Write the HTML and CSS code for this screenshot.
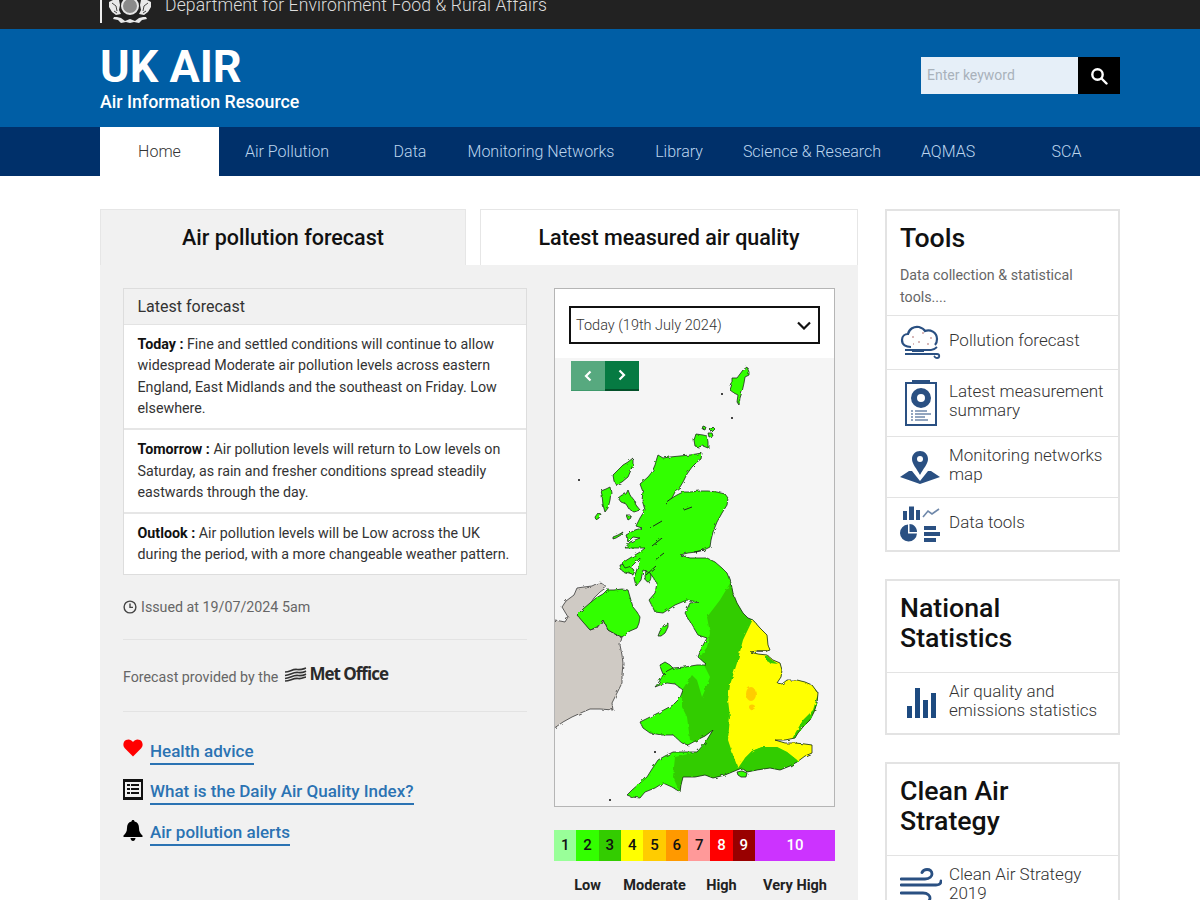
FILE: index.html
```html
<!DOCTYPE html>
<html lang="en">
<head>
  <meta charset="UTF-8" />
  <title>UK AIR - Air Information Resource</title>
  <link rel="stylesheet" href="styles.css">
</head>
<body>
  <div class="topbar">
    <div class="wrap topbar-in">
      <span class="crest-rule"></span>
      <svg class="crest" width="44" height="24" viewBox="0 0 44 24">
        <path d="M1 2l4-2h6l1 5-1 5 2 4-5 1-4-3-3-5zM43 2l-4-2h-6l-1 5 1 5-2 4 5 1 4-3 3-5z" fill="#e8e8e8"/>
        <path d="M4 3l4 3 1 5M6 11l3 2M40 3l-4 3-1 5M38 11l-3 2" fill="none" stroke="#444" stroke-width="1"/>
        <circle cx="22" cy="6" r="8" fill="#8a8a8a" stroke="#e8e8e8" stroke-width="2"/>
        <path d="M6 17l3 0 4 1 4 3 5-2 5 2 4-3 4-1 3 0 1 2-5 1-3 3-5-1-4 1-4-1-5 1-3-3-5-1z" fill="#e8e8e8"/>
      </svg>
      <span class="dept">Department for Environment Food &amp; Rural Affairs</span>
    </div>
  </div>

  <header class="header">
    <div class="wrap header-in">
      <div>
        <div class="site-name">UK AIR</div>
        <div class="site-sub">Air Information Resource</div>
      </div>
      <div class="search">
        <div class="search-input">Enter keyword</div>
        <div class="search-btn">
          <svg width="18" height="18" viewBox="0 0 18 18" fill="none" stroke="#fff" stroke-width="2.400"><circle cx="7.500" cy="7.500" r="5.200"/><path d="M11.500 11.500l5 5" stroke-linecap="round"/></svg>
        </div>
      </div>
    </div>
  </header>

  <nav class="nav">
    <div class="wrap nav-links">
      <a class="active" href="#">Home</a>
      <a href="#">Air Pollution</a>
      <a href="#">Data</a>
      <a href="#">Monitoring Networks</a>
      <a href="#">Library</a>
      <a href="#">Science &amp; Research</a>
      <a href="#">AQMAS</a>
      <a href="#">SCA</a>
    </div>
  </nav>

  <div class="wrap page">
    <main class="main">
      <div class="tabs">
        <div class="tab tab-on">Air pollution forecast</div>
        <div class="tab">Latest measured air quality</div>
      </div>
      <div class="tab-panel">
        <div class="forecast">
          <div class="fc-box">
            <div class="fc-head">Latest forecast</div>
            <div class="fc-row"><b>Today :</b> Fine and settled conditions will continue to allow widespread Moderate air pollution levels across eastern England, East Midlands and the southeast on Friday. Low elsewhere.</div>
            <div class="fc-row"><b>Tomorrow :</b> Air pollution levels will return to Low levels on Saturday, as rain and fresher conditions spread steadily eastwards through the day.</div>
            <div class="fc-row"><b>Outlook :</b> Air pollution levels will be Low across the UK during the period, with a more changeable weather pattern.</div>
          </div>

          <div class="issued">
            <svg width="14" height="14" viewBox="0 0 14 14" fill="none" stroke="#444" stroke-width="1.400"><circle cx="7" cy="7" r="5.900"/><path d="M7 3.400V7.400H10"/></svg>
            Issued at 19/07/2024 5am
          </div>

          <div class="provider">
            <span>Forecast provided by the</span>
            <svg class="met-mark" width="23" height="15" viewBox="0 0 23 15" fill="none" stroke="#333" stroke-width="1.700"><path d="M1 5C6 5 8 2 13 2.500S19 2 22 1"/><path d="M1 8.500C6 8 9 5 14 5.500S20 5 22 4"/><path d="M1 11.500C6 11 9 8 14 8.500S20 8 22 7"/><path d="M1 14C6 14 9 11 14 11.500S20 10 22 10"/></svg>
            <span class="met-name">Met Office</span>
          </div>

          <ul class="links">
            <li>
              <svg width="20" height="18" viewBox="0 0 20 18"><path d="M10 17.500L1.800 9.200C-.6 6.600.2 2.400 3 1 5.600-.2 8.400.6 10 3c1.600-2.400 4.400-3.200 7-2 2.800 1.400 3.600 5.600 1.200 8.200z" fill="#f00"/></svg>
              <a href="#">Health advice</a>
            </li>
            <li>
              <svg width="20" height="21" viewBox="0 0 20 21"><path d="M0 0h20v21H0z" fill="#111"/><path d="M2 3h16v15H2z" fill="#f1f1f1"/><path d="M4 5h3v2H4zM8 5h8v2H8zM4 9h3v2H4zM8 9h8v2H8zM4 13h3v2H4zM8 13h8v2H8z" fill="#111"/></svg>
              <a href="#">What is the Daily Air Quality Index?</a>
            </li>
            <li>
              <svg width="20" height="21" viewBox="0 0 19 21"><path d="M9.500 0c1 0 1.500.7 1.500 1.600 3.200.7 4.500 3.300 4.500 6.400 0 3.600 1.200 5.400 3.500 7.500v1.500H0v-1.500C2.300 13.400 3.500 11.600 3.500 8c0-3.100 1.300-5.700 4.500-6.400C8 .7 8.500 0 9.500 0z" fill="#000"/><path d="M7 18h5c0 1.500-1 3-2.500 3S7 19.500 7 18z" fill="#000"/></svg>
              <a href="#">Air pollution alerts</a>
            </li>
          </ul>
        </div>

        <div class="map-col">
          <div class="map-box">
            <div class="map-top">
              <div class="day-select">
                <span>Today (19th July 2024)</span>
                <svg width="14" height="9" viewBox="0 0 14 9" fill="none" stroke="#111" stroke-width="2.200"><path d="M1 1.500l6 6 6-6"/></svg>
              </div>
            </div>
            <div class="map-area">
              <svg class="uk-map" width="279" height="448" viewBox="555 358 279 448">
                <defs>
                  <filter id="rough" x="-5%" y="-5%" width="110%" height="110%">
                    <feTurbulence type="fractalNoise" baseFrequency=".22" numOctaves="2" seed="4"/>
                    <feDisplacementMap in="SourceGraphic" scale="3"/>
                  </filter>
                  <clipPath id="gb">
                    <path id="gbShape" d="M658 455 663 458 670 457 680 456 690 455 702 453 701 459 697 462 692 467 687 474 683 482 680 487 676 490 672 498 677 495 683 492 690 492 700 491 708 491 717 492 725 494 728 498 727 505 722 513 717 522 713 532 711 540 710 547 704 550 696 552 688 553 680 555 690 558 700 558 707 558 715 562 722 568 727 573 731 583 733 593 737 603 743 613 748 618 753 620 760 628 767 635 768 645 770 650 767 651 757 651 750 652 758 654 767 655 773 660 780 663 782 670 781 677 777 683 782 684 787 680 797 680 805 682 812 685 818 693 817 703 814 712 810 720 803 727 798 733 795 738 785 740 775 740 785 743 795 743 805 744 812 745 812 753 805 756 797 762 790 766 780 770 770 768 757 770 747 772 742 768 737 770 725 775 713 778 705 775 695 777 683 777 681 785 680 792 672 787 663 783 655 788 645 792 640 798 632 797 627 795 632 790 640 783 647 777 652 769 658 760 665 756 673 752 685 752 697 752 705 743 713 730 705 736 697 740 688 745 682 743 673 735 662 735 650 733 643 728 640 722 646 719 650 717 660 712 673 705 680 698 683 690 675 684 667 683 660 685 655 687 659 682 663 675 667 671 673 668 685 667 697 665 707 665 698 657 702 647 707 638 698 635 692 625 685 613 690 603 698 602 687 600 675 605 663 613 655 612 649 600 655 593 657 583 650 573 643 570 641 580 636 586 634 578 638 566 640 558 632 566 625 568 622 563 630 558 640 552 645 548 632 548 625 548 630 542 640 538 633 537 628 542 626 535 635 530 642 528 636 526 640 518 645 510 642 500 643 492 640 484 648 477 652 472 655 465 657 458z"/>
                  </clipPath>
                </defs>

                <g filter="url(#rough)">
                  <!-- ireland -->
                  <path class="eire" d="M555 620 565 622 568 617 562 607 566 601 574 595 577 588 584 587 592 586 600 582 607 587 600 592 594 598 590 604 584 610 578 615 583 621 590 630 597 628 603 620 608 630 615 634 622 637 620 645 622 655 623 663 622 675 622 683 617 693 612 703 613 710 600 709 590 709 583 712 572 717 563 722 553 729 550 625z"/>
                  <!-- northern ireland -->
                  <path class="land" d="M577 615 583 609 590 603 596 598 603 594 607 590 614 590 622 589 628 590 630 597 633 607 637 612 640 617 639 623 637 628 630 631 622 637 615 634 608 630 605 624 603 620 597 627 590 630 583 622z"/>

                  <!-- shetland and orkney -->
                  <path class="land" d="M747 367 749 372 749 375 745 377 744 383 742 392 740 398 739 405 737 402 738 395 734 393 730 390 732 384 732 378 737 378 740 374 743 370z"/>
                  <path class="land" d="M696 434 703 435 707 436 708 442 708 448 703 446 698 447 695 446 694 440z"/>
                  <path class="land" d="M703 426 706 427 705 430 702 429zM713 427 715 429 712 432 710 430zM708 433 712 433 713 436 709 437z"/>

                  <!-- hebrides and the other islands -->
                  <path class="land" d="M633 458 633 464 631 470 628 477 622 482 616 485 614 481 613 475 619 469 623 465 628 462z"/>
                  <path class="land" d="M610 487 611 492 610 500 608 508 605 512 603 505 602 495 601 491 606 489z"/>
                  <path class="land" d="M598 513 601 514 599 518 596 520 595 517z"/>
                  <path class="land" d="M628 490 630 495 634 500 636 505 640 510 634 512 629 509 626 504 621 502 618 498 622 495 626 494z"/>
                  <path class="land" d="M613 537 618 535 623 532 621 535 616 538 613 539z"/>
                  <path class="land" d="M626 515 630 515 631 518 628 520z"/>
                  <path class="land" d="M620 565 625 564 629 566 634 570 632 574 629 573 624 572 621 570z"/>
                  <ellipse class="land" cx="648" cy="576" rx="3" ry="6"/>
                  <path class="land" d="M658 636 660 631 664 625 668 623 668 627 665 633 661 636z"/>
                  <path class="land" d="M660 665 665 662 670 665 673 668 670 673 667 675 663 674 661 669z"/>
                  <path class="land" d="M737 772 742 771 747 773 746 777 741 777 738 775z"/>

                  <!-- england wales scotland, bands clipped to the coast -->
                  <use href="#gbShape" fill="#33ff00"/>
                  <g clip-path="url(#gb)">
                    <path fill="#33cc00" d="M732 580 720 600 707 617 710 633 707 647 700 657 710 677 705 690 702 697 697 680 692 675 682 690 682 707 687 717 690 740 705 745 697 752 675 757 673 777 683 800 760 800 760 620 740 595z"/>
                    <path fill="#ffff00" d="M753 619 743 640 737 663 730 685 728 700 730 717 728 740 733 755 738 768 745 758 752 751 762 747 777 747 787 752 797 760 812 770 835 760 835 660 790 620z"/>
                    <path fill="#33cc00" d="M745 758 752 751 762 747 777 747 787 752 797 760 806 772 740 780z"/>
                    <path fill="#33cc00" d="M766 655 772 660 778 664 770 663 766 660z"/>
                    <path fill="#33cc00" d="M822 690 817 697 813 710 803 720 797 730 792 739 825 739z"/>
                    <ellipse fill="#ffcc00" cx="751" cy="694" rx="5" ry="7"/>
                    <ellipse fill="#ffcc00" cx="752" cy="707" rx="3" ry="2.500"/>
                  </g>
                  <use href="#gbShape" class="coast"/>
                  <path class="inlet" d="M665 503 672 498M684 510 692 507M694 552 704 550M650 528 662 521M652 546 662 538M655 560 664 553M646 575 656 566M757 651 767 651"/>
                </g>
                <path class="dot" d="M578 479h2v2h-2zM721 393h2v2h-2zM731 417h2v2h-2zM609 799h2v2h-2zM654 751h2v2h-2z"/>
              </svg>
              <div class="map-arrows">
                <div class="arrow arrow-prev"><svg width="8" height="12" viewBox="0 0 8 12" fill="none" stroke="#fff" stroke-width="2.200"><path d="M6.500 1.500L2 6l4.500 4.500"/></svg></div>
                <div class="arrow arrow-next"><svg width="8" height="12" viewBox="0 0 8 12" fill="none" stroke="#fff" stroke-width="2.200"><path d="M1.500 1.500L6 6l-4.500 4.500"/></svg></div>
              </div>
            </div>
          </div>

          <div class="scale">
            <div class="cell c1">1</div>
            <div class="cell c2">2</div>
            <div class="cell c3">3</div>
            <div class="cell c4">4</div>
            <div class="cell c5">5</div>
            <div class="cell c6">6</div>
            <div class="cell c7">7</div>
            <div class="cell c8">8</div>
            <div class="cell c9">9</div>
            <div class="cell c10">10</div>
            <div class="band">Low</div>
            <div class="band">Moderate</div>
            <div class="band">High</div>
            <div class="band band-last">Very High</div>
          </div>
        </div>
      </div>
    </main>

    <aside class="side">
      <section class="card">
        <div class="card-head">
          <h2>Tools</h2>
          <p>Data collection &amp; statistical tools....</p>
        </div>
        <a class="tool tool-1" href="#">
          <svg width="42" height="36" viewBox="0 0 42 36" fill="none" stroke="#2a5082" stroke-width="2.200">
            <path d="M11 22c-5 0-9-2-9-7 0-4 3-6 6-6 1-5 6-8 11-7 3 1 5 2 6 4 5-2 12 1 12 8 0 3-1 5-2 6"/>
            <path d="M5 25h26c3 0 4-1 6-3M5 29h32c3 0 3 4 0 4-2 0-2-1-3-2M12 26h12" stroke-width="1.800"/>
            <path d="M12 12h2M22 8h2M30 13h2M18 17h2M27 19h2M13 19h1" stroke="#d9b9b9" stroke-width="2"/>
          </svg>
          <span>Pollution forecast</span>
        </a>
        <a class="tool tool-2" href="#">
          <svg width="42" height="46" viewBox="0 0 42 46">
            <path d="M6 3h30v42H6z" fill="#fff" stroke="#2a5082" stroke-width="2"/>
            <path d="M12 0h18v3H12z" fill="#2a5082"/>
            <circle cx="21" cy="18" r="7" fill="none" stroke="#2a5082" stroke-width="6"/>
            <path d="M11 31h2M15 31h12M11 34h2M15 34h16M11 37h2M15 37h10M11 40h2M15 40h13" stroke="#6f88aa" stroke-width="1.500"/>
          </svg>
          <span>Latest measurement summary</span>
        </a>
        <a class="tool tool-3" href="#">
          <svg width="42" height="34" viewBox="0 0 42 34">
            <path d="M20 1c4.500 0 8 3.500 8 8 0 5-5 10-8 16-3-6-8-11-8-16 0-4.500 3.500-8 8-8z" fill="#2a5082"/>
            <circle cx="20" cy="9" r="3" fill="#fff"/>
            <path d="M9 21 0 27 20 34 40 27 31 21 28 21 20 31 12 21z" fill="#2a5082"/>
          </svg>
          <span>Monitoring networks map</span>
        </a>
        <a class="tool tool-4" href="#">
          <svg width="42" height="38" viewBox="0 0 42 38" fill="#2a5082">
            <path d="M3 6h4v9H3zM9 1.500h5V15H9zM16 5h4v10h-4z"/>
            <path d="M23 12l5-6 4 3 7-5" fill="none" stroke="#6f88aa" stroke-width="1.600"/>
            <path d="M8 19.500a8.500 8.500 0 1 0 9 9H8z"/>
            <path d="M9.500 19c4 0 7.500 3.500 7.500 8H9.500z"/>
            <path d="M24 21h12v4H24zM24 27h16v4H24zM24 33h12v4H24z"/>
          </svg>
          <span>Data tools</span>
        </a>
      </section>

      <section class="card">
        <div class="card-head card-head-big">
          <h2>National Statistics</h2>
        </div>
        <a class="tool tool-5" href="#">
          <svg width="42" height="32" viewBox="0 0 42 32" fill="#1d4a80">
            <path d="M7 19h5v12H7zM15 1h5v30h-5zM23 13h5v18h-5zM31 6h5v25h-5z"/>
          </svg>
          <span>Air quality and emissions statistics</span>
        </a>
      </section>

      <section class="card">
        <div class="card-head card-head-big">
          <h2>Clean Air Strategy</h2>
        </div>
        <a class="tool tool-6" href="#">
          <svg width="42" height="36" viewBox="0 0 42 36" fill="none" stroke="#2a5082" stroke-width="2.800" stroke-linecap="round">
            <path d="M1 11h24c5 0 7-3 7-5 0-3-2-4.500-5-4.500-2 0-4 1-5 3"/>
            <path d="M1 17h35c3 0 5-1 5-4"/>
            <path d="M1 25h22c5 0 7 3 7 5s-2 5-5 5"/>
          </svg>
          <span>Clean Air Strategy 2019</span>
        </a>
      </section>
    </aside>
  </div>
</body>
</html>
```

FILE: styles.css
```css
html, body {
  margin: 0;
  padding: 0;
  height: 900px;
  overflow: hidden;
}
body {
  font-family: 'Roboto', 'Liberation Sans', sans-serif;
  color: #333;
  background: #fff;
}
.wrap {
  width: 1020px;
  margin-left: 100px;
}

/* Top bar */
.topbar {
  height: 29px;
  background: #222;
  overflow: hidden;
}
.topbar-in {
  display: flex;
  align-items: flex-start;
  height: 29px;
}
.crest-rule {
  width: 2px;
  height: 23px;
  background: #eee;
}
.crest {
  margin-left: 6px;
  margin-right: 13px;
  flex: none;
}
.dept {
  font-size: 17.600px;
  font-weight: 300;
  color: #ddd;
  line-height: 10px;
  letter-spacing: .1px;
  white-space: nowrap;
}

/* Header */
.header {
  background: #005ea5;
  height: 98px;
}
.header-in {
  display: flex;
  justify-content: space-between;
  align-items: flex-start;
}
.site-name {
  font-size: 45px;
  font-weight: 700;
  color: #fff;
  line-height: 44px;
  padding-top: 16px;
}
.site-sub {
  font-size: 17.800px;
  font-weight: 500;
  color: #fff;
  line-height: 22px;
  margin-top: 2px;
}
.search {
  display: flex;
  margin-top: 28px;
}
.search-input {
  width: 151px;
  height: 37px;
  padding-left: 6px;
  background: #e6eff8;
  color: #a9b2bb;
  font-size: 14px;
  line-height: 37px;
}
.search-btn {
  width: 42px;
  height: 37px;
  background: #000;
  display: flex;
  align-items: center;
  justify-content: center;
}

/* Nav */
.nav {
  background: #00306a;
  height: 49px;
}
.nav-links {
  display: grid;
  grid-template-columns: 119px 136px 110px 152px 124px 142px 130px 107px;
}
.nav-links a {
  height: 49px;
  line-height: 49px;
  text-align: center;
  font-size: 16px;
  font-weight: 300;
  color: #bcd5ee;
  text-decoration: none;
}
.nav-links a.active {
  background: #fff;
  color: #333;
}

/* Page */
.page {
  display: flex;
  justify-content: space-between;
  padding-top: 33px;
}
.main {
  width: 758px;
}
.tabs {
  display: grid;
  grid-template-columns: 366px 378px;
  column-gap: 14px;
}
.tab {
  height: 56px;
  line-height: 55px;
  text-align: center;
  font-size: 21.500px;
  font-weight: 500;
  color: #111;
  background: #fff;
  border: 1px solid #e6e6e6;
  border-bottom: 0;
  box-sizing: border-box;
}
.tab-on {
  background: #f1f1f1;
}
.tab-panel {
  background: #f1f1f1;
  display: flex;
  padding: 23px 23px 40px;
  height: 700px;
  box-sizing: border-box;
  gap: 27px;
}

/* Forecast column */
.forecast {
  width: 404px;
  flex: none;
}
.fc-box {
  border: 1px solid #ddd;
  background: #fff;
}
.fc-head {
  background: #f1f1f1;
  font-size: 16px;
  line-height: 35px;
  padding-left: 13.500px;
  border-bottom: 1px solid #e3e3e3;
}
.fc-row {
  padding: 9px 14px 8.500px 13.500px;
  font-size: 14.250px;
  line-height: 21.400px;
  color: #333;
  border-bottom: 2px solid #e6e6e6;
}
.fc-row:last-child {
  border-bottom: 0;
}
.fc-row b {
  color: #111;
  font-weight: 700;
}
.issued {
  display: flex;
  align-items: center;
  gap: 4px;
  font-size: 14.250px;
  color: #666;
  height: 64px;
  border-bottom: 1px solid #e3e3e3;
}
.provider {
  display: flex;
  align-items: center;
  height: 68px;
  padding-top: 3px;
  border-bottom: 1px solid #e3e3e3;
  font-size: 14.250px;
  color: #666;
}
.met-mark {
  margin-left: 6px;
  margin-bottom: 6px;
}
.met-name {
  font-family: 'Open Sans', sans-serif;
  font-weight: 700;
  font-size: 17px;
  letter-spacing: -1px;
  color: #2a2a2a;
  margin-left: 2px;
  margin-bottom: 7px;
}
.links {
  list-style: none;
  margin: 17.500px 0 0;
  padding: 0;
}
.links li {
  height: 40.500px;
  display: flex;
  align-items: flex-start;
  gap: 7px;
}
.links svg {
  margin-top: 9px;
  flex: none;
}
.links li a {
  display: block;
  margin-top: 10px;
  font-size: 17px;
  font-weight: 500;
  line-height: 23px;
  color: #2b73b3;
  text-decoration: none;
  border-bottom: 2px solid #2b73b3;
}

/* Map column */
.map-col {
  width: 281px;
  flex: none;
}
.map-box {
  border: 1px solid #b5b5b5;
  background: #fff;
}
.map-top {
  height: 69px;
  padding: 17px 14px 0;
  box-sizing: border-box;
}
.day-select {
  height: 38px;
  border: 2.500px solid #111;
  display: flex;
  align-items: center;
  justify-content: space-between;
  padding: 0 7px 0 5px;
  font-size: 14.500px;
  font-weight: 300;
  color: #333;
  box-sizing: border-box;
}
.map-area {
  position: relative;
  height: 448px;
  background: #f5f5f5;
  overflow: hidden;
}
.uk-map {
  display: block;
}
.map-arrows {
  position: absolute;
  left: 16px;
  top: 3px;
  display: flex;
}
.arrow {
  width: 34px;
  height: 30px;
  display: flex;
  align-items: center;
  justify-content: center;
  box-sizing: border-box;
}
.arrow-prev {
  background: #57a97f;
  border-bottom: 1px solid #3f9a6c;
}
.arrow-next {
  background: #067a42;
  border-bottom: 2px solid #035029;
}
.land {
  fill: #33ff00;
  stroke: #1d2b1d;
  stroke-width: .8;
}
.eire {
  fill: #cfcac4;
  stroke: #222;
  stroke-width: .7;
}
.coast {
  fill: none;
  stroke: #1d2b1d;
  stroke-width: .8;
}
.dot {
  fill: #444;
}
.inlet {
  fill: none;
  stroke: #1d2b1d;
  stroke-width: 1;
}

/* Index scale */
.scale {
  display: grid;
  grid-template-columns: repeat(9, 1fr) 80px;
  margin-top: 23px;
}
.cell {
  height: 31px;
  line-height: 31px;
  text-align: center;
  font-size: 15px;
  font-weight: 500;
  color: #111;
}
.c1 { background: #99ff99; }
.c2 { background: #33ff00; }
.c3 { background: #33cc00; }
.c4 { background: #ffff00; }
.c5 { background: #ffcc00; }
.c6 { background: #ff9900; }
.c7 { background: #ff9999; }
.c8 { background: #ff0000; color: #fff; }
.c9 { background: #990000; color: #fff; }
.c10 { background: #cc33ff; color: #fff; }
.band {
  grid-column: span 3;
  text-align: center;
  font-size: 14.500px;
  font-weight: 700;
  color: #222;
  margin-top: 16px;
}
.band-last {
  grid-column: span 1;
}

/* Sidebar */
.side {
  width: 235px;
}
.card {
  border: 2px solid #e3e3e3;
  background: #fff;
  margin-bottom: 27px;
}
.card-head {
  padding: 12px 13px 7px;
}
.card-head h2 {
  margin: 0;
  font-size: 26.700px;
  font-weight: 500;
  line-height: 30px;
  color: #111;
}
.card-head p {
  margin: 11px 0 0;
  font-size: 14.250px;
  line-height: 22px;
  color: #666;
}
.card-head-big {
  padding-bottom: 19px;
}
.tool {
  display: flex;
  align-items: center;
  gap: 7px;
  padding-left: 13px;
  padding-right: 8px;
  border-top: 1px solid #e3e3e3;
  text-decoration: none;
  font-size: 17px;
  font-weight: 300;
  line-height: 19px;
  color: #333;
}
.tool svg {
  flex: none;
}
.tool span {
  margin-bottom: 4px;
}
.tool-1 { height: 53px; }
.tool-2 { height: 66px; }
.tool-3 { height: 60px; }
.tool-4 { height: 52px; }
.tool-5 { height: 60px; }
.tool-6 { height: 60px; }
```
